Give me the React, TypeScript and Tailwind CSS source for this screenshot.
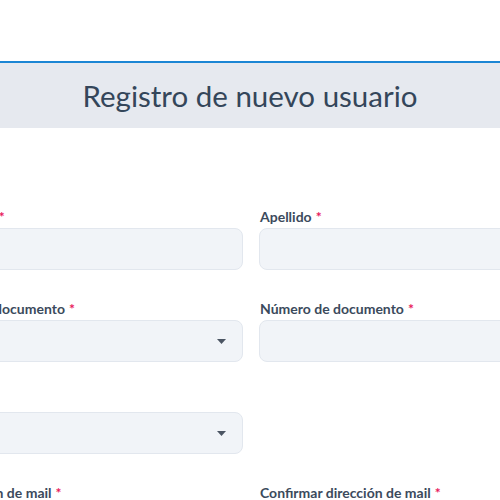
import React from "react";

const font = { fontFamily: "Lato, 'Open Sans', sans-serif" };

function Label({ text }: { text: string }) {
  return (
    <div className="mb-[2px] flex items-center whitespace-nowrap pl-[1px] text-[14px] font-bold leading-[18px] text-[#3b4a5c]">
      <span>{text}</span>
      <span className="ml-[4px] text-[#e8195a]">*</span>
    </div>
  );
}

function Input() {
  return <div className="h-[42px] rounded-[8px] border border-[#e2e7ee] bg-[#f1f4f8]" />;
}

function Select() {
  return (
    <div className="flex h-[42px] items-center justify-end rounded-[8px] border border-[#e2e7ee] bg-[#f1f4f8] pr-[16px]">
      <svg width="9" height="5" viewBox="0 0 9 5">
        <path d="M0 0 L9 0 L4.5 5 Z" fill="#4b5563" />
      </svg>
    </div>
  );
}

function Field({ label, select }: { label: string; select?: boolean }) {
  return (
    <div className="flex flex-col">
      <Label text={label} />
      {select ? <Select /> : <Input />}
    </div>
  );
}

export default function App() {
  return (
    <div className="h-[500px] w-[500px] overflow-hidden bg-white" style={font}>
      <div className="h-[61px]" />
      <div className="flex h-[67px] items-center justify-center border-t-2 border-[#1c86d4] bg-[#e6e9ef]">
        <h1 className="text-[29.5px] font-normal leading-none text-[#34465a]">Registro de nuevo usuario</h1>
      </div>
      <div className="flex justify-center pl-[2px] pt-[80px]">
        <div className="grid w-[616px] shrink-0 grid-cols-2 gap-x-[16px] gap-y-[30px]">
          <Field label="Nombre" />
          <Field label="Apellido" />
          <Field label="Tipo de documento" select />
          <Field label="Número de documento" />
          <Field label="Género" select />
          <div />
          <Field label="Dirección de mail" />
          <Field label="Confirmar dirección de mail" />
        </div>
      </div>
    </div>
  );
}
